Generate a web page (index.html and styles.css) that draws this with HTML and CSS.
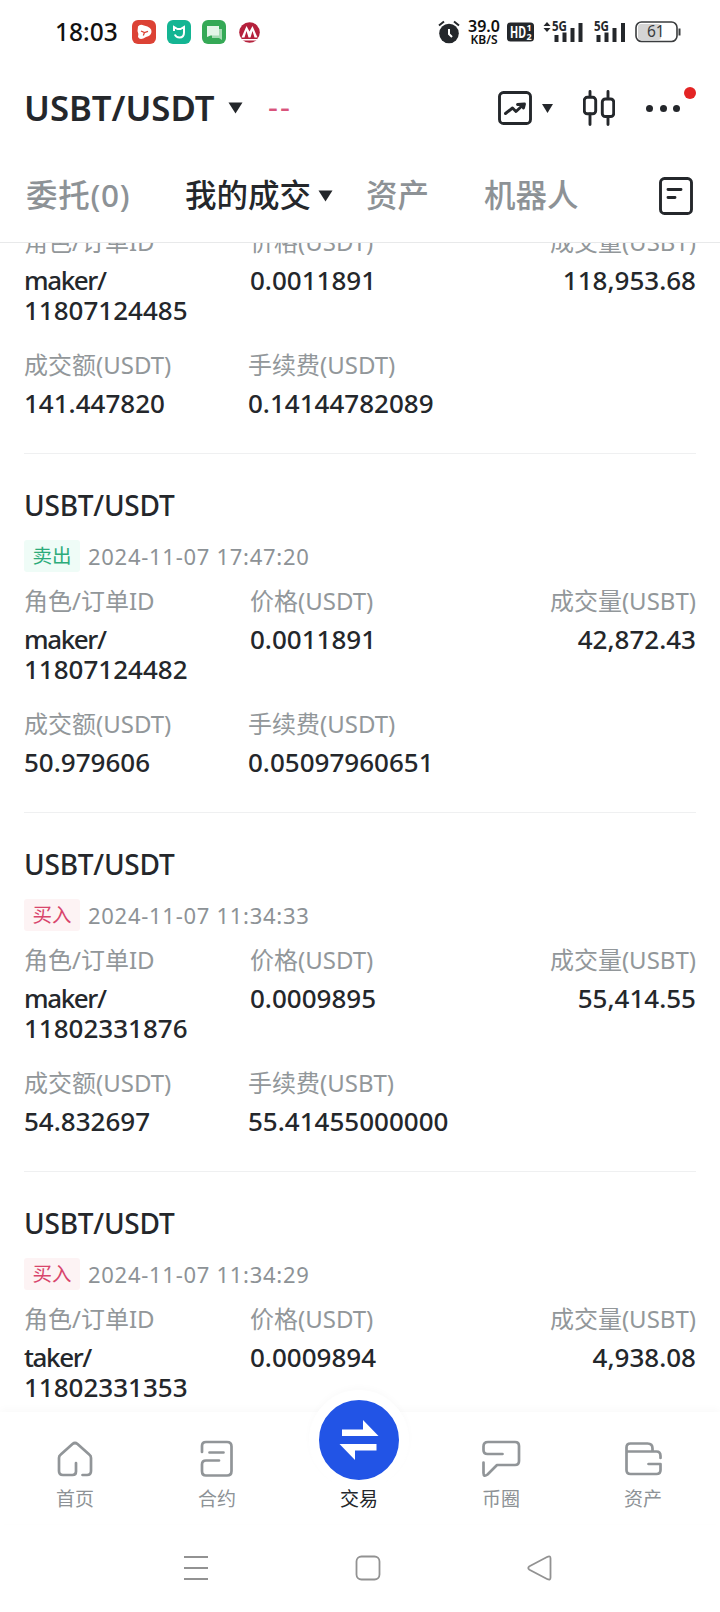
FILE: index.html
```html
<!DOCTYPE html>
<html lang="zh-CN">
<head>
    <meta charset="UTF-8">
    <meta name="viewport" content="width=device-width, initial-scale=1.0">
    <title>我的成交</title>
    <link rel="stylesheet" href="styles.css">
</head>
<body>
    <div class="phone">
        <div class="status-bar">
            <span class="clock">18:03</span>
            <svg class="app-icon" width="24" height="24" viewBox="0 0 24 24">
                <rect width="24" height="24" rx="6" fill="#dc4235"/>
                <path d="M6 6.500Q8 3.500 12 5.500Q20 7 19.500 12Q19 16 14 17Q8 21 6 17Q7 14 5.500 11Z" fill="#fff"/>
                <path d="M9 11l3.500 1.500 3.500-1.200M12.500 12.500l-1.200 3" fill="none" stroke="#dc4235" stroke-width="1.300"/>
            </svg>
            <svg class="app-icon" width="24" height="24" viewBox="0 0 24 24">
                <rect width="24" height="24" rx="6" fill="#14b593"/>
                <path d="M7 11V7l3.500 2h3L17 7v5.500q0 5-4.500 5-3.500 0-4.700-3" fill="none" stroke="#fff" stroke-width="2"/>
            </svg>
            <svg class="app-icon" width="24" height="24" viewBox="0 0 24 24">
                <rect width="24" height="24" rx="6" fill="#35a956"/>
                <path d="M10 9h10v11l-3-2h-7z" fill="#a5dbb3"/>
                <path d="M5 6h12v9.500H8.500L5 17z" fill="#e3f5e7"/>
            </svg>
            <svg class="bank-icon" width="21" height="21" viewBox="0 0 21 21">
                <circle cx="10.500" cy="10.500" r="10.300" fill="#b5203c"/>
                <path d="M2.500 15.500L7.500 4l3 5.500 3-5.500 5 11.500h-3l-2-6.500-2 6.500h-2l-2-6.500-2 6.500zM2 17h17l-1.500 1.500h-14z" fill="#fff"/>
            </svg>
            <div class="status-right">
                <svg width="22" height="24" viewBox="0 0 22 24">
                    <circle cx="11" cy="13.500" r="9.800" fill="#24272b"/>
                    <path d="M1 5.500L6 1.500M21 5.500L16 1.500" stroke="#24272b" stroke-width="2"/>
                    <path d="M11 9v5l3 3" fill="none" stroke="#fff" stroke-width="2"/>
                </svg>
                <div class="net-speed"><b>39.0</b><span>KB/S</span></div>
                <svg class="hd" width="28" height="20" viewBox="0 0 28 20">
                    <rect y="0.500" width="27" height="19" rx="3.500" fill="#24272b"/>
                    <text x="3" y="15.500" class="hd-text" textLength="16" lengthAdjust="spacingAndGlyphs">HD</text>
                    <text x="19.500" y="9" class="hd-num">1</text>
                    <text x="19.500" y="17.500" class="hd-num">2</text>
                </svg>
                <svg class="signal-a" width="41" height="24" viewBox="0 0 41 24">
                    <path d="M4 2l3.500 4h-7zM4 12L.5 8h7z" fill="#24272b"/>
                    <text x="9" y="11" class="net-text" textLength="15" lengthAdjust="spacingAndGlyphs">5G</text>
                    <path d="M13.500 22v-7M21.500 22V12.500M29.500 22V8M37.500 22V3" stroke="#24272b" stroke-width="4"/>
                </svg>
                <svg class="signal-b" width="32" height="24" viewBox="0 0 32 24">
                    <text x="0" y="11" class="net-text" textLength="15" lengthAdjust="spacingAndGlyphs">5G</text>
                    <path d="M4.500 22v-7M12.500 22V12.500M20.500 22V8M29 22V3" stroke="#24272b" stroke-width="4"/>
                </svg>
                <svg class="battery" width="46" height="22" viewBox="0 0 46 22">
                    <rect x="3" y="3" width="23" height="16" rx="3" fill="#d4d4d4"/>
                    <rect x="1" y="1" width="41" height="19.500" rx="5.500" fill="none" stroke="#3a3c3e" stroke-width="1.600"/>
                    <path d="M44.500 7.500v7" stroke="#3a3c3e" stroke-width="2"/>
                    <text x="12" y="16.300" class="battery-text">61</text>
                </svg>
            </div>
        </div>

        <header class="pair-header">
            <h1>USBT/USDT</h1>
            <svg class="caret" width="15" height="12" viewBox="0 0 15 12"><path d="M.5.5h14L7.500 11.500z"/></svg>
            <span class="change">--</span>
            <div class="tools">
                <svg class="line-icon" width="34" height="34" viewBox="0 0 34 34">
                    <rect x="1.500" y="1.500" width="31" height="31" rx="4"/>
                    <path d="M7.500 22.500l7-5.500 3.500 3.500 7.500-7M19.500 13.500l7-.5-1 4"/>
                </svg>
                <svg class="caret small" width="11" height="9" viewBox="0 0 11 9"><path d="M0 0h11L5.500 9z"/></svg>
                <svg class="line-icon candles" width="32" height="36" viewBox="0 0 32 36">
                    <rect x="1.300" y="7.300" width="11.400" height="16.500" rx="3"/>
                    <rect x="19.300" y="9" width="11.400" height="17.500" rx="3"/>
                    <path d="M7 1.500v5M7 24v10.500M25 1.500V8M25 27v7.500"/>
                </svg>
                <div class="more">
                    <i></i><i></i><i></i>
                    <span class="badge"></span>
                </div>
            </div>
        </header>

        <nav class="tabs">
            <span class="tab orders">委托(0)</span>
            <span class="tab trades active">我的成交</span>
            <svg class="caret" width="15" height="12" viewBox="0 0 15 12"><path d="M.5.5h14L7.500 11.500z"/></svg>
            <span class="tab assets">资产</span>
            <span class="tab robot">机器人</span>
            <svg class="line-icon history" width="34" height="38" viewBox="0 0 34 38">
                <rect x="1.500" y="1.500" width="31" height="35" rx="4"/>
                <path d="M9 12.500h13M9 20.500h7"/>
            </svg>
        </nav>

        <main class="list">
            <div class="scroll">
                <section class="card">
                    <div class="row">
                        <div class="cell"><label>角色/订单ID</label><p><span class="role">maker/</span><br>11807124485</p></div>
                        <div class="cell"><label>价格(USDT)</label><p>0.0011891</p></div>
                        <div class="cell right"><label>成交量(USBT)</label><p>118,953.68</p></div>
                    </div>
                    <div class="row second">
                        <div class="cell"><label>成交额(USDT)</label><p>141.447820</p></div>
                        <div class="cell"><label>手续费(USDT)</label><p>0.14144782089</p></div>
                    </div>
                </section>
                <section class="card">
                    <h2>USBT/USDT</h2>
                    <div class="meta"><span class="side sell">卖出</span><time>2024-11-07 17:47:20</time></div>
                    <div class="row">
                        <div class="cell"><label>角色/订单ID</label><p><span class="role">maker/</span><br>11807124482</p></div>
                        <div class="cell"><label>价格(USDT)</label><p>0.0011891</p></div>
                        <div class="cell right"><label>成交量(USBT)</label><p>42,872.43</p></div>
                    </div>
                    <div class="row second">
                        <div class="cell"><label>成交额(USDT)</label><p>50.979606</p></div>
                        <div class="cell"><label>手续费(USDT)</label><p>0.05097960651</p></div>
                    </div>
                </section>
                <section class="card">
                    <h2>USBT/USDT</h2>
                    <div class="meta"><span class="side buy">买入</span><time>2024-11-07 11:34:33</time></div>
                    <div class="row">
                        <div class="cell"><label>角色/订单ID</label><p><span class="role">maker/</span><br>11802331876</p></div>
                        <div class="cell"><label>价格(USDT)</label><p>0.0009895</p></div>
                        <div class="cell right"><label>成交量(USBT)</label><p>55,414.55</p></div>
                    </div>
                    <div class="row second">
                        <div class="cell"><label>成交额(USDT)</label><p>54.832697</p></div>
                        <div class="cell"><label>手续费(USBT)</label><p>55.41455000000</p></div>
                    </div>
                </section>
                <section class="card">
                    <h2>USBT/USDT</h2>
                    <div class="meta"><span class="side buy">买入</span><time>2024-11-07 11:34:29</time></div>
                    <div class="row">
                        <div class="cell"><label>角色/订单ID</label><p><span class="role">taker/</span><br>11802331353</p></div>
                        <div class="cell"><label>价格(USDT)</label><p>0.0009894</p></div>
                        <div class="cell right"><label>成交量(USBT)</label><p>4,938.08</p></div>
                    </div>
                </section>
            </div>
        </main>

        <nav class="bottom-nav">
            <a class="item">
                <svg width="40" height="40" viewBox="0 0 40 40"><path d="M21 24v8.500q0 3.500-3.500 3.500H8q-4 0-4-4V19q0-2 1.500-3.200L17.500 5q2.500-2 5 0L34.500 15.800Q36 17 36 19v13q0 4-4 4h-4.500"/></svg>
                <span>首页</span>
            </a>
            <a class="item">
                <svg width="40" height="40" viewBox="0 0 40 40"><path d="M5 13V7q0-4 4-4h21q4.500 0 4.500 4.500V32q0 4.500-4.500 4.500H9Q5 36.500 5 32v-6.500Q5 21.500 9 21.500H22M12.500 13.500h14"/></svg>
                <span>合约</span>
            </a>
            <a class="item active">
                <span class="trade-btn">
                    <svg width="42" height="42" viewBox="0 0 42 42"><path d="M4 10.500h21V1l15.500 16H4zM38.500 25v6.500H17V41L1.500 25z"/></svg>
                </span>
                <span>交易</span>
            </a>
            <a class="item">
                <svg width="40" height="40" viewBox="0 0 40 40"><path d="M21.500 15H6.500Q2.500 15 2.500 11V7.500Q2.500 3 7 3h27q4 0 4 4v15q0 4-4 4H16L6.500 35.500q-4 3-4-1.500V23.500"/></svg>
                <span>币圈</span>
            </a>
            <a class="item">
                <svg width="40" height="40" viewBox="0 0 40 40"><path d="M3.500 13V8.500Q3.500 4.500 7.500 4.500h17q5 0 5 5V12.500M3.500 12.500H33.500q4 0 4 4.500v2M3.500 12.500V31q0 4 4 4h26q4 0 4-4v-6H25.500"/></svg>
                <span>资产</span>
            </a>
        </nav>

        <div class="system-nav">
            <svg width="24" height="26" viewBox="0 0 24 26"><path d="M0 2h24M0 13h24M0 24h24"/></svg>
            <svg width="26" height="26" viewBox="0 0 26 26"><rect x="1.500" y="1.500" width="23" height="23" rx="5"/></svg>
            <svg width="26" height="26" viewBox="0 0 26 26"><path d="M2.500 11.200L20.500 1.800q3-1.300 3 1.700v19q0 3-3 1.700L2.500 14.800q-2.500-1.800 0-3.600z"/></svg>
        </div>
    </div>
</body>
</html>
```
FILE: styles.css
```css
* {
    box-sizing: border-box;
}

body {
    margin: 0;
    background: #fff;
    color: #24272b;
    font-family: "Noto Sans", "Noto Sans CJK SC", sans-serif;
}

h1, h2, p {
    margin: 0;
}

svg {
    display: block;
    flex: none;
}

.phone {
    width: 720px;
    height: 1612px;
    display: flex;
    flex-direction: column;
    overflow: hidden;
    background: #fff;
}

/* status bar */
.status-bar {
    height: 64px;
    padding: 0 39px 0 55px;
    display: flex;
    align-items: center;
    color: #111;
}

.clock {
    width: 77px;
    font-size: 24.5px;
    font-weight: 500;
    line-height: 34px;
}

.app-icon {
    margin-right: 11px;
}

.bank-icon {
    margin-left: 2px;
}

.status-right {
    margin-left: auto;
    display: flex;
    align-items: center;
}

.net-speed {
    width: 34px;
    margin-left: 7px;
    display: flex;
    flex-direction: column;
    align-items: center;
    line-height: 13px;
    padding-top: 2px;
}

.net-speed b {
    font-size: 16px;
    font-weight: 600;
}

.net-speed span {
    font-size: 12px;
    font-weight: 600;
}

.hd {
    margin-left: 6px;
}

.hd-text {
    fill: #fff;
    font-size: 16px;
    font-weight: 700;
}

.hd-num {
    fill: #fff;
    font-size: 9px;
    font-weight: 700;
}

.net-text {
    fill: #24272b;
    font-size: 13.5px;
    font-weight: 700;
}

.signal-a {
    margin-left: 8px;
}

.signal-b {
    margin-left: 10px;
}

.battery {
    margin-left: 9px;
}

.battery-text {
    fill: #3a3c3e;
    font-size: 15.5px;
}

/* pair header */
.pair-header {
    height: 88px;
    padding: 0 24px;
    display: flex;
    align-items: center;
}

.pair-header h1 {
    width: 204px;
    font-size: 34.7px;
    font-weight: 600;
    line-height: 40px;
    padding-bottom: 1px;
}

.caret {
    fill: #24272b;
}

.change {
    margin-left: 25px;
    color: #d9547b;
    font-size: 31px;
    letter-spacing: 2px;
    line-height: 40px;
    padding-bottom: 4px;
}

.tools {
    margin-left: auto;
    display: flex;
    align-items: center;
}

.line-icon {
    fill: none;
    stroke: #24272b;
    stroke-width: 2.9;
    stroke-linecap: round;
    stroke-linejoin: round;
}

.small {
    margin-left: 10px;
}

.candles {
    margin-left: 30px;
}

.more {
    position: relative;
    width: 34px;
    margin: 0 16px 0 31px;
    display: flex;
    justify-content: space-between;
}

.more i {
    width: 7px;
    height: 7px;
    border-radius: 50%;
    background: #24272b;
}

.badge {
    position: absolute;
    top: -18px;
    right: -16px;
    width: 12px;
    height: 12px;
    border-radius: 50%;
    background: #e32424;
}

/* tabs */
.tabs {
    height: 91px;
    padding: 0 27px 2px 26px;
    display: flex;
    align-items: center;
    border-bottom: 1px solid #e8e9ea;
}

.tab {
    color: #8d9296;
    font-size: 31.5px;
    font-weight: 500;
    line-height: 40px;
    padding-bottom: 2px;
    white-space: nowrap;
}

.tab.active {
    color: #24272b;
}

.orders {
    width: 159px;
    letter-spacing: 0.7px;
}

.trades {
    width: 133px;
}

.assets {
    margin-left: 33px;
    width: 118px;
}

.history {
    margin-left: auto;
}

/* trade list */
.list {
    height: 1169px;
    flex: none;
    overflow: hidden;
}

/* the first trade is scrolled partly under the tabs */
.scroll {
    margin-top: -17px;
}

.card {
    height: 359px;
    margin: 0 24px;
    padding-top: 31px;
    border-bottom: 1px solid #eff0f1;
}

.card:first-child {
    height: 228px;
    padding-top: 0;
}

.card h2 {
    font-size: 28px;
    font-weight: 500;
    line-height: 40px;
    letter-spacing: -0.2px;
}

.meta {
    height: 32px;
    margin: 15px 0 13px;
    display: flex;
    align-items: center;
    gap: 8px;
}

.side {
    width: 56px;
    height: 32px;
    border-radius: 3px;
    text-align: center;
    font-size: 19.5px;
    line-height: 32px;
}

.sell {
    background: #effcf7;
    color: #2cab7a;
}

.buy {
    background: #fdf3f4;
    color: #d8456c;
}

time {
    color: #8d9296;
    font-size: 22px;
    letter-spacing: 0.72px;
}

.row {
    display: grid;
    grid-template-columns: 226px 222px 224px;
}

.second {
    margin-top: 24px;
    grid-template-columns: 224px 1fr;
}

.cell label {
    display: block;
    margin-bottom: 7px;
    color: #92979a;
    font-size: 24px;
    font-weight: 400;
    line-height: 32px;
}

.cell p {
    font-size: 26px;
    font-weight: 500;
    line-height: 30px;
}

.role {
    letter-spacing: -1.4px;
}

.right {
    text-align: right;
}

/* bottom navigation */
.bottom-nav {
    height: 112px;
    padding: 0 6px 0 4px;
    display: flex;
    background: #fff;
    box-shadow: 0 -3px 8px rgba(0, 0, 0, 0.025);
}

.item {
    flex: 1;
    display: flex;
    flex-direction: column;
    align-items: center;
    justify-content: flex-end;
    color: #8d9296;
    font-size: 19px;
    line-height: 28px;
    padding-bottom: 11px;
}

.item > svg {
    margin-bottom: 6px;
    fill: none;
    stroke: #919598;
    stroke-width: 2.7;
    stroke-linecap: round;
    stroke-linejoin: round;
}

.item.active {
    color: #24272b;
}

.trade-btn {
    flex: none;
    width: 100px;
    height: 100px;
    margin-bottom: -5px;
    border: 10px solid #fff;
    border-radius: 50%;
    background: #2254e6;
    display: flex;
    align-items: center;
    justify-content: center;
    box-shadow: 0 -3px 6px rgba(0, 0, 0, 0.02);
}

.trade-btn svg {
    fill: #fff;
}

.system-nav {
    height: 88px;
    padding: 0 167px 0 184px;
    display: flex;
    align-items: center;
    justify-content: space-between;
}

.system-nav svg {
    fill: none;
    stroke: #929292;
    stroke-width: 1.8;
}
```
